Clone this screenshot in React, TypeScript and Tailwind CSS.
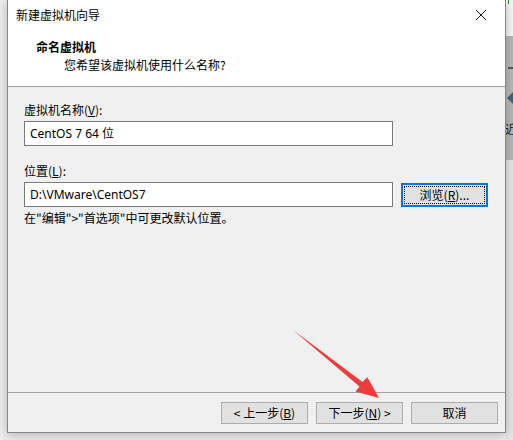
import React from "react";

const font = { fontFamily: '"Noto Sans CJK SC", "Noto Sans", sans-serif' };
const latin = { fontFamily: '"Noto Sans", "Noto Sans CJK SC", sans-serif' };

function Btn({ children, focused }: { children: React.ReactNode; focused?: boolean }) {
  if (focused) {
    return (
      <div className="w-[87px] h-[24px] border-2 border-[#0078d7] bg-[#e1e1e1] p-[1px] flex">
        <div className="flex-1 border border-dotted border-black flex items-center justify-center text-[12px] leading-none text-black">
          {children}
        </div>
      </div>
    );
  }
  return (
    <div className="w-[87px] h-[22px] border border-[#adadad] bg-[#e1e1e1] flex items-center justify-center text-[12px] leading-none text-black">
      {children}
    </div>
  );
}

export default function App() {
  return (
    <div className="relative w-[513px] h-[440px] overflow-hidden bg-[#eeeeee] flex" style={font}>
      <div className="w-[7px] shrink-0" />
      <div className="w-[499px] h-[433px] shrink-0 flex flex-col border-l border-r border-b border-[#868686] bg-[#f0f0f0] shadow-[0_2px_10px_rgba(0,0,0,0.25)] z-10">
        {/* title bar */}
        <div className="h-[30px] bg-white flex items-center justify-between pl-[8px] pr-[8px]">
          <span className="text-[12px] text-black leading-none">新建虚拟机向导</span>
          <svg width="30" height="30" viewBox="0 0 30 30" className="mr-[1px]">
            <path d="M10 10 L20 20 M20 10 L10 20" stroke="#111" strokeWidth="1" />
          </svg>
        </div>
        {/* header */}
        <div className="h-[57px] bg-white border-b border-[#a0a0a0] flex flex-col pl-[28px] pt-[9px]">
          <span className="text-[12px] font-bold text-black leading-[16px]">命名虚拟机</span>
          <span className="text-[12px] text-black leading-[16px] pl-[28px] mt-[2px]">您希望该虚拟机使用什么名称?</span>
        </div>
        {/* body */}
        <div className="flex-1 flex flex-col pl-[16px] pt-[15px]">
          <span className="text-[12px] leading-[16px] text-black">
            虚拟机名称(<span className="underline">V</span>):
          </span>
          <div className="mt-[3px] w-[369px] h-[25px] border border-[#7a7a7a] bg-white flex items-center pl-[5px] text-[12px] text-black" style={latin}>
            CentOS 7 64 位
          </div>
          <span className="mt-[17px] text-[12px] leading-[16px] text-black">
            位置(<span className="underline">L</span>):
          </span>
          <div className="mt-[3px] flex items-center gap-[8px]">
            <div className="w-[369px] h-[25px] border border-[#7a7a7a] bg-white flex items-center pl-[5px] text-[12px] text-black" style={latin}>
              D:\VMware\CentOS7
            </div>
            <Btn focused>
              浏览(<span className="underline">R</span>)...
            </Btn>
          </div>
          <span className="mt-[3px] text-[12px] leading-[16px] text-black">
            在"编辑"&gt;"首选项"中可更改默认位置。
          </span>
        </div>
        {/* footer */}
        <div className="h-[40px] border-t border-[#a0a0a0] flex items-start justify-end pt-[9px] pr-[7px] gap-[8px]">
          <Btn>
            &lt; 上一步(<span className="underline">B</span>)
          </Btn>
          <Btn>
            下一步(<span className="underline">N</span>) &gt;
          </Btn>
          <Btn>取消</Btn>
        </div>
      </div>
      {/* right strip (background app) */}
      <div className="w-[7px] shrink-0 flex flex-col overflow-hidden">
        <div className="h-[36px] bg-[#f7f7f7] relative">
          <div className="absolute left-[2px] top-0 w-[1px] h-[4px] bg-[#2e8b3a]" />
        </div>
        <div className="h-[124px] bg-[#b8b8b8] flex flex-col items-start">
          <div className="mt-[31px] ml-[2px] w-[5px] h-[2px] bg-[#4a5868]" />
          <div className="mt-[22px] ml-[1px] w-0 h-0 border-t-[7px] border-b-[7px] border-r-[7px] border-t-transparent border-b-transparent border-r-[#4f6070]" />
          <span className="mt-[18px] -ml-[1px] text-[12px] leading-none text-[#222]">近</span>
        </div>
        <div className="flex-1 bg-[#e6e6e6]" />
      </div>
      {/* red annotation arrow */}
      <svg className="absolute left-0 top-0 z-20 pointer-events-none" width="513" height="440" viewBox="0 0 513 440">
        <polygon
          points="293,330 362.5,382.0 367.3,377.2 379,398 355.5,391.4 359.5,386.6"
          fill="#f23a3a"
        />
      </svg>
    </div>
  );
}
